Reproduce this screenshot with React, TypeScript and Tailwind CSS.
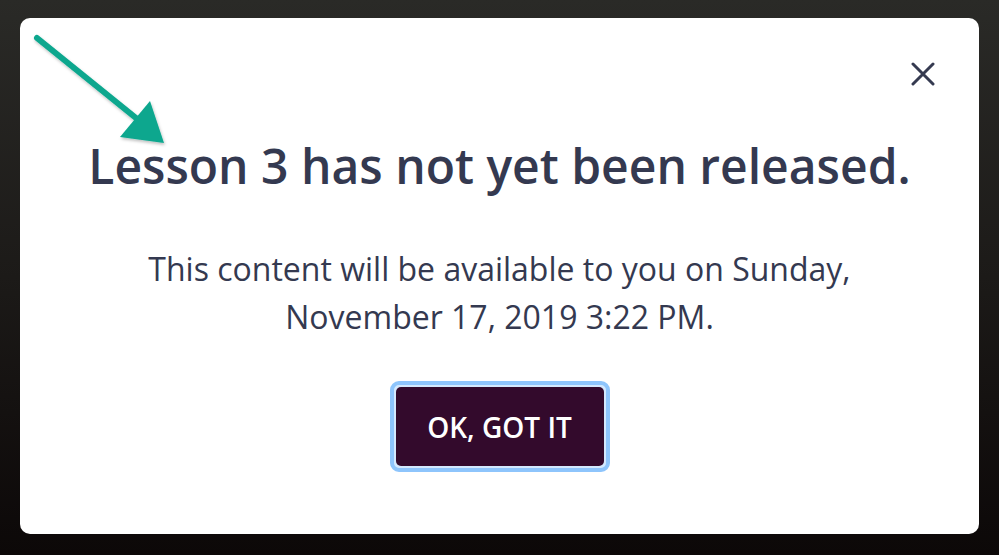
export default function App() {
  return (
    <div
      className="w-[999px] h-[555px] overflow-hidden bg-gradient-to-b from-[#2a2a27] via-[#1c1a18] to-[#0c0808] pt-[18px] px-[20px] pb-[21px]"
      style={{ fontFamily: '"Open Sans", sans-serif' }}
    >
      <div className="relative h-full rounded-[10px] bg-white flex flex-col items-center">
        {/* стрелка-подсказка */}
        <svg
          className="absolute left-[-20px] top-[-18px] pointer-events-none"
          width="200"
          height="170"
          viewBox="0 0 200 170"
        >
          <defs>
            <filter id="sh" x="-20%" y="-20%" width="140%" height="140%">
              <feDropShadow dx="1" dy="2" stdDeviation="1.5" floodColor="#000" floodOpacity="0.25" />
            </filter>
          </defs>
          <g filter="url(#sh)" fill="#0aa78e" stroke="none">
            <line x1="37" y1="38" x2="136" y2="118" stroke="#0aa78e" strokeWidth="6" strokeLinecap="round" />
            <polygon points="120,137 150,101 164,143" />
          </g>
        </svg>

        <button className="absolute right-[40px] top-[40px] w-[32px] h-[32px] flex items-center justify-center text-[#353a50]">
          <svg width="24" height="24" viewBox="0 0 24 24" fill="none" stroke="currentColor" strokeWidth="3" strokeLinecap="round">
            <path d="M2 2 L22 22 M22 2 L2 22" />
          </svg>
        </button>

        <h1 className="mt-[118px] text-[48px] leading-[60px] font-semibold text-[#343950]">
          Lesson 3 has not yet been released.
        </h1>

        <p className="mt-[49px] text-[32px] leading-[48px] text-[#343950] text-center">
          This content will be available to you on Sunday,
          <br />
          November 17, 2019 3:22 PM.
        </p>

        <div className="mt-[40px] rounded-[9px] border-[4px] border-[#8ec5fc] p-[2px] bg-[#d4e9fe]">
          <button className="w-[208px] h-[79px] rounded-[5px] bg-[#330a2c] text-white text-[28px] font-semibold">
            OK, GOT IT
          </button>
        </div>
      </div>
    </div>
  );
}
